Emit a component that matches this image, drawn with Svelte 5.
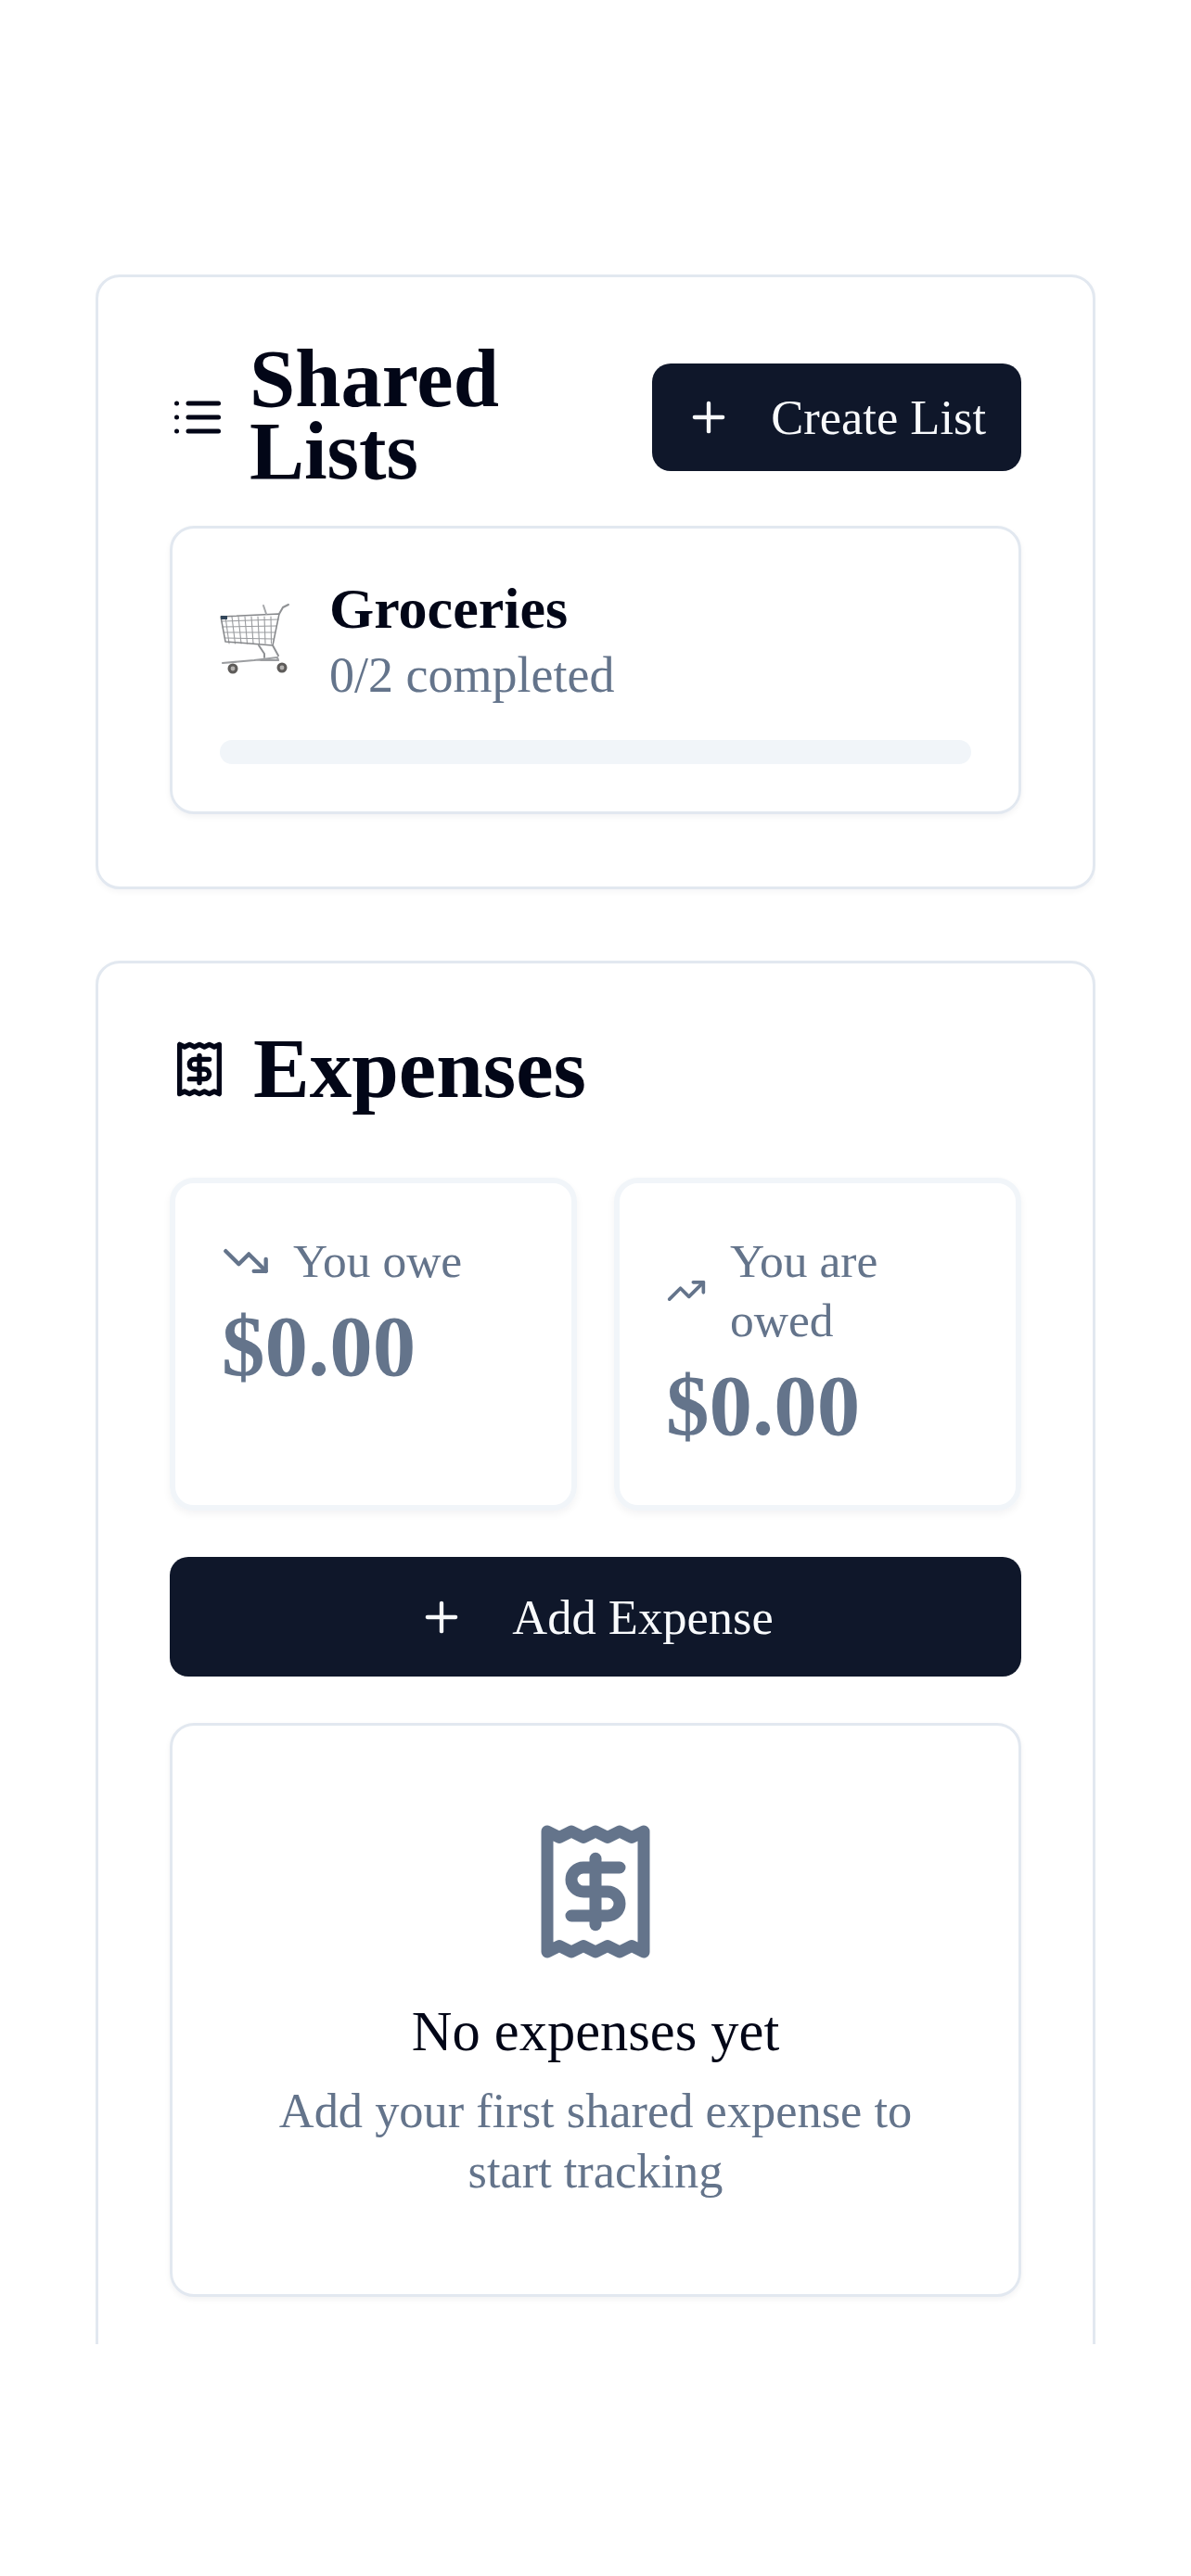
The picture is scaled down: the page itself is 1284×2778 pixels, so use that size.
<script lang="ts">
	const basketV = [24, 31, 38, 45, 52, 59, 66, 73];
	const basketH = [41, 47, 53, 59];
</script>

<main class="page">
	<div class="scroller">
		<section class="card lists">
			<header class="lists-head">
				<div class="title">
					<svg class="list-icon" viewBox="0 0 24 24" fill="none" stroke="currentColor" stroke-width="2" stroke-linecap="round" stroke-linejoin="round">
						<path d="M3 6h.01" /><path d="M3 12h.01" /><path d="M3 18h.01" />
						<path d="M8 6h13" /><path d="M8 12h13" /><path d="M8 18h13" />
					</svg>
					<h2>Shared Lists</h2>
				</div>
				<button class="btn create">
					<svg class="plus" viewBox="0 0 24 24" fill="none" stroke="currentColor" stroke-width="2" stroke-linecap="round"><path d="M5 12h14" /><path d="M12 5v14" /></svg>
					Create List
				</button>
			</header>

			<article class="list-item">
				<div class="list-row">
					<svg class="cart" viewBox="18 20 78 80" fill="none" stroke-linecap="round" stroke-linejoin="round">
						<g stroke="#9a9c9f" stroke-width="1.1">
							{#each basketV as x, i}
								<path d="M{x} 36 L{x + 4 - i * 0.5} 65" />
							{/each}
							{#each basketH as y, i}
								<path d="M{20 + i * 1.2} {y} L{81 - i * 1.8} {y - 2 + i}" />
							{/each}
						</g>
						<path d="M19 36 L82 33 L75 67 L24 63 Z" stroke="#85878a" stroke-width="1.5" />
						<path d="M82 33 L86 26 L92 23" stroke="#8f9194" stroke-width="2" />
						<path d="M65 24 L68 33" stroke="#a6a8ab" stroke-width="2" />
						<path d="M60 67 L66 76 L66 80 M75 67 L81 78" stroke="#8f9194" stroke-width="2" />
						<path d="M21 86 L55 83 L80 80 L81 83 L62 83" stroke="#9c9ea1" stroke-width="2.2" />
						<rect x="19" y="35" width="7" height="4" fill="#33475b" />
						<circle cx="32" cy="92" r="5.5" fill="#5e5c5a" />
						<circle cx="32" cy="92" r="2.4" fill="#b4b2b0" />
						<circle cx="85" cy="91" r="5.5" fill="#5e5c5a" />
						<circle cx="85" cy="91" r="2.4" fill="#b4b2b0" />
					</svg>
					<div class="list-text">
						<h3>Groceries</h3>
						<p>0/2 completed</p>
					</div>
				</div>
				<div class="progress"></div>
			</article>
		</section>

		<section class="card expenses">
			<header class="exp-head">
				<svg class="receipt-sm" viewBox="0 0 24 24" fill="none" stroke="currentColor" stroke-width="2" stroke-linecap="round" stroke-linejoin="round">
					<path d="M4 2v20l2-1 2 1 2-1 2 1 2-1 2 1 2-1 2 1V2l-2 1-2-1-2 1-2-1-2 1-2-1-2 1Z" />
					<path d="M16 8h-6a2 2 0 1 0 0 4h4a2 2 0 1 1 0 4H8" />
					<path d="M12 17.5v-11" />
				</svg>
				<h2>Expenses</h2>
			</header>

			<div class="stats">
				<div class="stat">
					<div class="stat-label">
						<svg class="trend" viewBox="0 0 24 24" fill="none" stroke="currentColor" stroke-width="2" stroke-linecap="round" stroke-linejoin="round">
							<path d="m22 17-8.5-8.5-5 5L2 7" /><path d="M16 17h6v-6" />
						</svg>
						<span>You owe</span>
					</div>
					<div class="stat-value">$0.00</div>
				</div>
				<div class="stat">
					<div class="stat-label">
						<svg class="trend narrow" viewBox="0 0 24 24" fill="none" stroke="currentColor" stroke-width="2" stroke-linecap="round" stroke-linejoin="round">
							<path d="m22 7-8.5 8.5-5-5L2 17" /><path d="M16 7h6v6" />
						</svg>
						<span>You are owed</span>
					</div>
					<div class="stat-value">$0.00</div>
				</div>
			</div>

			<button class="btn add">
				<svg class="plus" viewBox="0 0 24 24" fill="none" stroke="currentColor" stroke-width="2" stroke-linecap="round"><path d="M5 12h14" /><path d="M12 5v14" /></svg>
				Add Expense
			</button>

			<div class="empty">
				<svg class="receipt-lg" viewBox="0 0 24 24" fill="none" stroke="currentColor" stroke-width="2" stroke-linecap="round" stroke-linejoin="round">
					<path d="M4 2v20l2-1 2 1 2-1 2 1 2-1 2 1 2-1 2 1V2l-2 1-2-1-2 1-2-1-2 1-2-1-2 1Z" />
					<path d="M16 8h-6a2 2 0 1 0 0 4h4a2 2 0 1 1 0 4H8" />
					<path d="M12 17.5v-11" />
				</svg>
				<h3>No expenses yet</h3>
				<p>Add your first shared expense to start tracking</p>
			</div>
		</section>
	</div>
</main>

<style>
	:global(body) {
		margin: 0;
		background: #ffffff;
	}

	.page {
		box-sizing: border-box;
		height: 2778px;
		padding: 296px 103px 250px;
		font-family: "Liberation Serif", "Times New Roman", serif;
		color: #020617;
	}

	.scroller {
		height: 100%;
		overflow: hidden;
		display: flex;
		flex-direction: column;
		gap: 77px;
	}

	.card {
		box-sizing: border-box;
		flex-shrink: 0;
		background: #fff;
		border: 3px solid #e2e8f0;
		border-radius: 26px;
		padding: 77px;
		box-shadow: 0 3px 6px rgba(15, 23, 42, 0.04);
	}

	.lists {
		padding-top: 73px;
		padding-bottom: 78px;
	}

	.expenses {
		padding-top: 81px;
	}

	h2,
	h3,
	p {
		margin: 0;
	}

	h2 {
		font-weight: 700;
		font-size: 88.5px;
		line-height: 78px;
	}

	.lists-head {
		display: flex;
		align-items: center;
		justify-content: space-between;
		margin-bottom: 39px;
	}

	.title {
		display: flex;
		align-items: center;
		gap: 26px;
	}

	.list-icon {
		width: 60px;
		height: 60px;
		flex-shrink: 0;
	}

	.title h2 {
		width: 290px;
		margin: -3px 0 3px;
	}

	.btn {
		display: flex;
		align-items: center;
		justify-content: center;
		gap: 41px;
		border: none;
		background: #0f172a;
		color: #f8fafc;
		font-family: inherit;
		font-size: 52.5px;
		border-radius: 20px;
	}

	.plus {
		width: 52px;
		height: 52px;
		flex-shrink: 0;
	}

	.create {
		height: 116px;
		padding: 0 38px 0 35px;
	}

	.list-item {
		border: 3px solid #e2e8f0;
		border-radius: 26px;
		padding: 50px 51px 51px;
		box-shadow: 0 3px 6px rgba(15, 23, 42, 0.05);
	}

	.list-row {
		display: flex;
		align-items: center;
		gap: 40px;
		margin-bottom: 34px;
	}

	.cart {
		width: 78px;
		height: 80px;
		flex-shrink: 0;
		margin-top: -6px;
	}

	.list-text h3 {
		font-size: 62px;
		font-weight: 700;
		line-height: 72px;
	}

	.list-text p {
		font-size: 54px;
		line-height: 72px;
		color: #64748b;
	}

	.progress {
		height: 26px;
		border-radius: 13px;
		background: #f1f5f9;
	}

	.exp-head {
		display: flex;
		align-items: center;
		gap: 26px;
		height: 66px;
		margin-bottom: 84px;
	}

	.receipt-sm {
		width: 64px;
		height: 64px;
		flex-shrink: 0;
	}

	.exp-head h2 {
		font-size: 91px;
	}

	.stats {
		display: grid;
		grid-template-columns: 1fr 1fr;
		gap: 40px;
		margin-bottom: 50px;
	}

	.stat {
		box-sizing: border-box;
		border: 6px solid #f1f5f9;
		border-radius: 26px;
		padding: 52px 50px 47px;
		box-shadow: 0 4px 8px rgba(15, 23, 42, 0.05);
		color: #64748b;
	}

	.stat-label {
		display: flex;
		align-items: center;
		gap: 25px;
		font-size: 51.5px;
		line-height: 64px;
	}

	.trend {
		width: 52px;
		height: 52px;
		flex-shrink: 0;
	}

	.trend.narrow {
		width: 44px;
		height: 44px;
	}

	.stat-value {
		font-size: 93px;
		font-weight: 700;
		line-height: 120px;
	}

	.add {
		width: 100%;
		height: 129px;
		gap: 50px;
		margin-bottom: 50px;
	}

	.empty {
		display: flex;
		flex-direction: column;
		align-items: center;
		text-align: center;
		border: 3px solid #e2e8f0;
		border-radius: 26px;
		padding: 101px 101px 100px;
		box-shadow: 0 3px 6px rgba(15, 23, 42, 0.05);
	}

	.receipt-lg {
		width: 156px;
		height: 156px;
		color: #64748b;
		margin-bottom: 34px;
	}

	.empty h3 {
		font-size: 60.5px;
		font-weight: 400;
		line-height: 78px;
		margin-bottom: 14px;
	}

	.empty p {
		font-size: 52.4px;
		line-height: 65px;
		color: #64748b;
	}
</style>
